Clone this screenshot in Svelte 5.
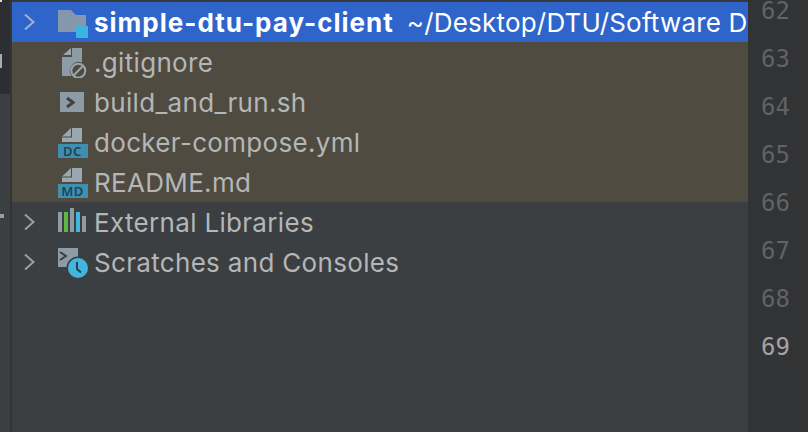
<script>
  const files = [
    { name: '.gitignore', icon: 'ignore' },
    { name: 'build_and_run.sh', icon: 'shell' },
    { name: 'docker-compose.yml', icon: 'dc' },
    { name: 'README.md', icon: 'md' }
  ];
  const lines = [62, 63, 64, 65, 66, 67, 68, 69];
</script>

<div class="window">
  <div class="rail">
    <div class="rail-top">
      <span class="corner"></span>
      <span class="tab"></span>
    </div>
    <div class="rail-bottom"><span class="mark"></span></div>
  </div>

  <div class="tree">
    <div class="row root">
      <svg class="chevron" width="14" height="18" viewBox="0 0 14 18"><path d="M2 1.5l8.5 7.5-8.5 7.5" /></svg>
      <svg class="icon" width="32" height="32" viewBox="0 0 32 32">
        <path d="M0 4h13l5 5h10v17H0z" fill="#8497ad" />
        <rect x="18" y="20" width="12" height="12" fill="#3cb4e0" />
      </svg>
      <span class="name">simple-dtu-pay-client</span>
      <span class="path">~/Desktop/DTU/Software D</span>
    </div>

    <div class="changed">
      {#each files as file}
        <div class="row file">
          {#if file.icon === 'ignore'}
            <svg class="icon" width="32" height="32" viewBox="0 0 32 32">
              <path d="M5 9l8-7v7z" fill="#9aa7b0" />
              <path d="M14 2h10v14.500a9 9 0 0 0-10.500 13.500H4V11h10z" fill="#8d9ba6" />
              <circle cx="20.300" cy="24.700" r="7" fill="none" stroke="#9aa7b0" stroke-width="2" />
              <path d="M16 29l8.500-8.500" stroke="#9aa7b0" stroke-width="2" />
            </svg>
          {:else if file.icon === 'shell'}
            <svg class="icon" width="32" height="32" viewBox="0 0 32 32">
              <rect x="2" y="6" width="24" height="20" fill="#8d9ba6" />
              <path d="M9 12l6 4.500-6 4.500" fill="none" stroke="#45403a" stroke-width="3" />
            </svg>
          {:else}
            <svg class="icon" width="32" height="32" viewBox="0 0 32 32">
              <path d="M4 10.500l9-8.500v8.500z" fill="#9aa7b0" />
              <path d="M14 2h10v14H4v-4.500h10z" fill="#9aa7b0" />
              <rect x="0" y="18" width="30" height="14" fill="#3f90b0" />
              <text x="14.500" y="29.500" class="badge">{file.icon.toUpperCase()}</text>
            </svg>
          {/if}
          <span class="label">{file.name}</span>
        </div>
      {/each}
    </div>

    <div class="row">
      <svg class="chevron" width="14" height="18" viewBox="0 0 14 18"><path d="M2 1.500l8.500 7.500-8.500 7.500" /></svg>
      <svg class="icon" width="32" height="32" viewBox="0 0 32 32">
        <rect x="0" y="6" width="4" height="20" fill="#8d9ba6" />
        <rect x="6" y="6" width="4" height="20" fill="#62b543" />
        <rect x="12" y="2" width="4" height="24" fill="#8d9ba6" />
        <rect x="18" y="6" width="4" height="20" fill="#40b6e0" />
        <rect x="24" y="10" width="4" height="16" fill="#8d9ba6" />
      </svg>
      <span class="label">External Libraries</span>
    </div>

    <div class="row">
      <svg class="chevron" width="14" height="18" viewBox="0 0 14 18"><path d="M2 1.500l8.500 7.500-8.500 7.500" /></svg>
      <svg class="icon" width="32" height="32" viewBox="0 0 32 32">
        <rect x="0" y="2" width="20" height="19" fill="#8d9ba6" />
        <path d="M2 6l6 4-6 4" fill="none" stroke="#3c3f41" stroke-width="2" />
        <circle cx="20" cy="22" r="11.500" fill="#3c3f41" />
        <circle cx="20" cy="22" r="10" fill="#40b6e0" />
        <path d="M19 16v7l4 3.500" fill="none" stroke="#2c3f4b" stroke-width="2" />
      </svg>
      <span class="label">Scratches and Consoles</span>
    </div>
  </div>

  <div class="gutter">
    {#each lines as line}
      <div class="line" class:current={line === 69}>{line}</div>
    {/each}
  </div>
</div>

<style>
  :global(body) {
    margin: 0;
    background: #313335;
  }

  .window {
    display: flex;
    width: 808px;
    height: 432px;
    overflow: hidden;
    background: #3c3f41;
    font-family: "Inter", "Liberation Sans", sans-serif;
  }

  .rail {
    flex: 0 0 12px;
    box-sizing: border-box;
    display: flex;
    flex-direction: column;
    border-right: 2px solid #323436;
  }

  .rail-top {
    flex: 0 0 94px;
    background: #2c2e31;
  }

  .corner {
    display: block;
    width: 2px;
    height: 2px;
    background: #d8d8d8;
  }

  .tab {
    display: block;
    width: 2px;
    height: 14px;
    margin-top: 52px;
    background: #a9abad;
  }

  .rail-bottom {
    flex: 1;
    padding-top: 120px;
    background: #3b3f42;
  }

  .mark {
    display: block;
    width: 4px;
    height: 4px;
    background: #9a9c9e;
  }

  .tree {
    flex: 0 0 736px;
    min-width: 0;
    padding-top: 2px;
    background: #3c3f41;
    box-shadow: inset 0 2px 0 #37393b;
  }

  .row {
    display: flex;
    align-items: center;
    height: 40px;
    padding-left: 11px;
    white-space: nowrap;
    overflow: hidden;
    color: #b4b6b7;
    font-size: 26px;
    letter-spacing: 0.32px;
  }

  .root {
    background: #2f65ca;
    color: #fff;
  }

  .root .chevron {
    stroke: #a3b3cf;
  }

  .changed {
    background: #4f4b41;
  }

  .file {
    padding-left: 46px;
  }

  .chevron {
    flex: none;
    margin-right: 21px;
    fill: none;
    stroke: #9da0a2;
    stroke-width: 2;
  }

  .icon {
    flex: none;
    margin-right: 4px;
  }

  .name {
    font-weight: 700;
    letter-spacing: 1px;
    margin-right: 13px;
  }

  .path {
    letter-spacing: 0.2px;
  }

  .badge {
    font-family: "Noto Sans", sans-serif;
    font-size: 13px;
    font-weight: 600;
    letter-spacing: 0.5px;
    fill: #1f4258;
    text-anchor: middle;
  }

  .gutter {
    flex: 1;
    background: #313335;
  }

  .line {
    height: 48px;
    line-height: 22px;
    padding-left: 13px;
    color: #606366;
    font-family: "DejaVu Sans Mono", monospace;
    font-size: 24px;
  }

  .current {
    color: #a4a3a3;
  }
</style>
